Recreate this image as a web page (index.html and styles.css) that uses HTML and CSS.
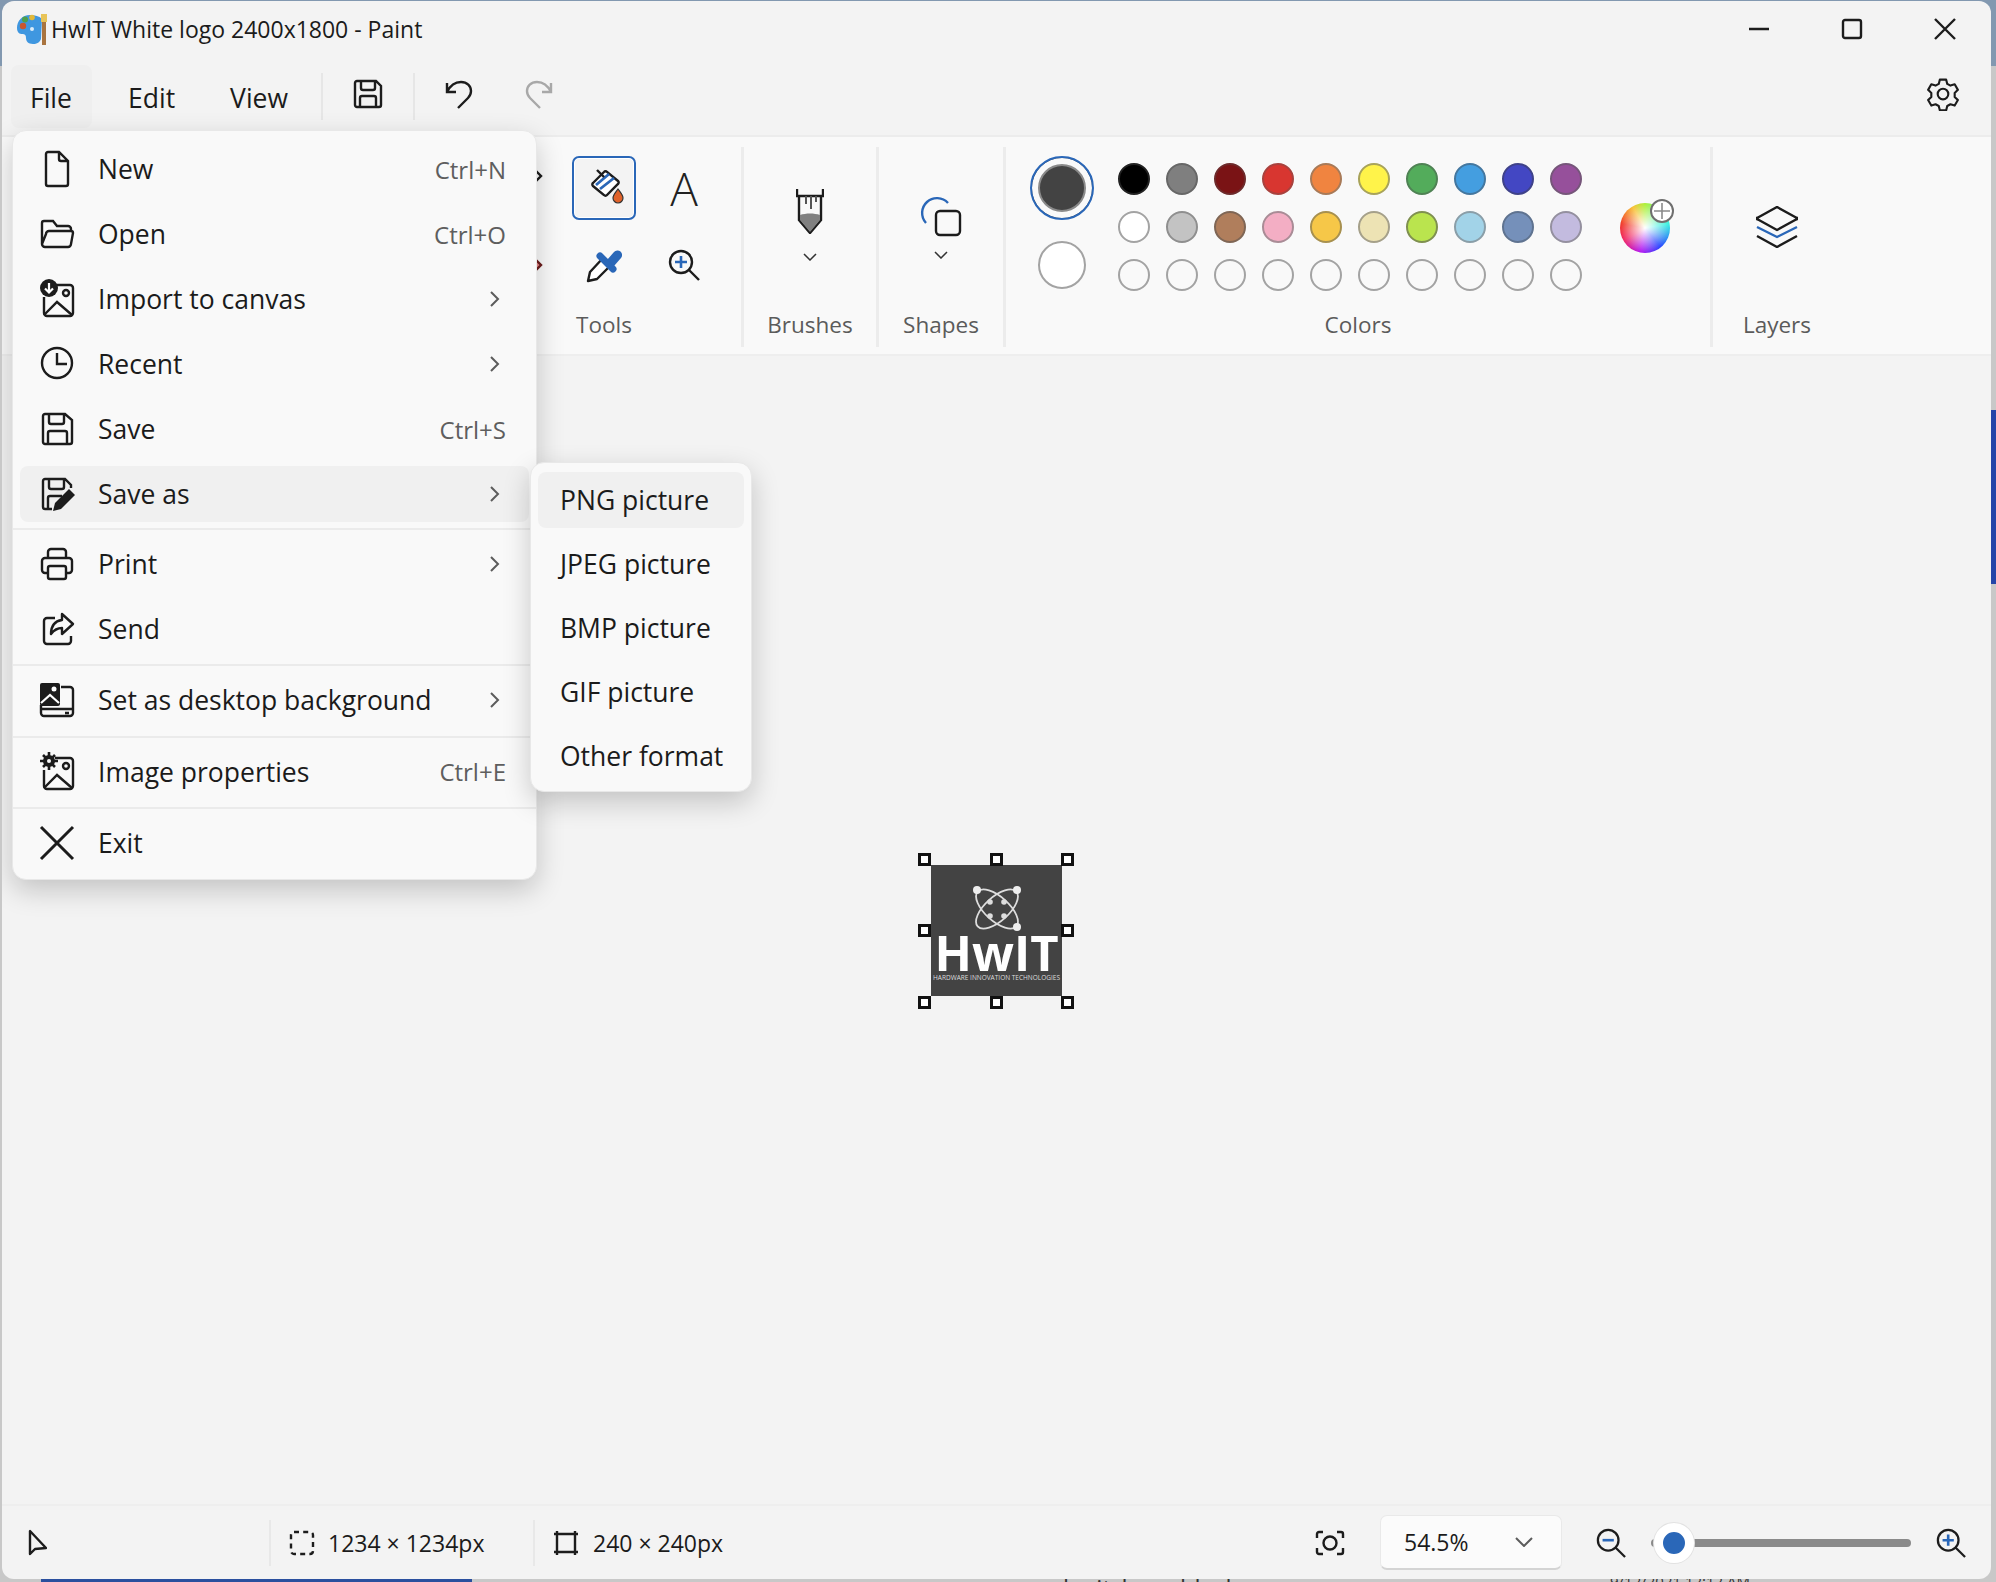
FILE: index.html
```html
<!DOCTYPE html>
<html lang="en">
<head>
    <meta charset="UTF-8">
    <meta name="viewport" content="width=device-width, initial-scale=1.0">
    <title>HwIT White logo 2400x1800 - Paint</title>
    <link rel="stylesheet" href="styles.css">
</head>
<body>
<div class="desktop">
    <!-- what shows around the window -->
    <div class="bg-top"></div>
    <div class="bg-right"></div>
    <div class="bg-bottom"></div>
    <span class="bg-file">hwit_logo_black</span>
    <span class="bg-date">9/12/2021 12:12 AM</span>

    <div class="window">
        <!-- Title bar -->
        <header class="titlebar">
            <svg class="app-icon" viewBox="0 0 32 32" width="32" height="32">
                <path d="M14 2C6 2 1 8 1 15c0 5 3 6 5 6 3 0 4 1 4 4 0 3 2 6 7 6 4 0 7-2 8-5l1-20C23 3 19 2 14 2z" fill="#3f97e0"/>
                <circle cx="7" cy="13" r="3.2" fill="#c9562f"/>
                <circle cx="9" cy="6.5" r="3" fill="#4fa04a"/>
                <circle cx="16" cy="4.5" r="2.8" fill="#e2b93a"/>
                <circle cx="16" cy="16" r="2" fill="#dcecf8"/>
                <path d="M26 8h4v24h-4z" fill="#a9743f"/>
                <path d="M25 1h6v8h-6z" fill="#e8c458"/>
            </svg>
            <span class="title-text">HwIT White logo 2400x1800 - Paint</span>
            <div class="win-controls">
                <button class="win-btn"><svg viewBox="0 0 24 24" width="24" height="24"><path d="M2 12h20" class="ln"/></svg></button>
                <button class="win-btn"><svg viewBox="0 0 24 24" width="24" height="24"><rect x="3" y="3" width="18" height="18" rx="2" class="ln"/></svg></button>
                <button class="win-btn"><svg viewBox="0 0 24 24" width="24" height="24"><path d="M2 2l20 20M22 2L2 22" class="ln"/></svg></button>
            </div>
        </header>

        <!-- Menu row -->
        <div class="toolbar">
            <a class="tab tab-active">File</a>
            <a class="tab">Edit</a>
            <a class="tab">View</a>
            <span class="tb-sep tb-sep-first"></span>
            <button class="tb-btn">
                <svg viewBox="0 0 32 32" width="32" height="32"><path d="M5 3h19l5 5v19a2 2 0 0 1-2 2H5a2 2 0 0 1-2-2V5a2 2 0 0 1 2-2z M9 3v7a2 2 0 0 0 2 2h10a2 2 0 0 0 2-2V3 M8 29V20a2 2 0 0 1 2-2h12a2 2 0 0 1 2 2v9" class="ln"/></svg>
            </button>
            <span class="tb-sep"></span>
            <button class="tb-btn">
                <svg viewBox="0 0 32 32" width="32" height="32"><path d="M3 5v9h9 M3 14C6 8 11 4 17 4c6 0 10 4 10 9 0 3-1 5-3 7L14 30" class="ln"/></svg>
            </button>
            <button class="tb-btn tb-redo">
                <svg viewBox="0 0 32 32" width="32" height="32"><path d="M29 5v9h-9 M29 14C26 8 21 4 15 4 9 4 5 8 5 13c0 3 1 5 3 7l10 10" class="ln ln-off"/></svg>
            </button>
            <button class="tb-settings">
                <svg viewBox="0 0 32 32" width="34" height="34"><path d="M13 2.5h6l1 4 3 1.600 4-1.200 3 5.200-3 2.900v3.800l3 2.900-3 5.200-4-1.200-3 1.600-1 4h-6l-1-4-3-1.600-4 1.200-3-5.200 3-2.900v-3.800l-3-2.900 3-5.200 4 1.200 3-1.600z" class="ln ln-gear" stroke-linejoin="round"/><circle cx="16" cy="16" r="5" class="ln ln-gear"/></svg>
            </button>
        </div>

        <!-- Ribbon -->
        <section class="ribbon">
            <div class="group group-tools">
                <div class="tool-grid">
                    <span class="tool-hidden tool-hidden-top"><svg viewBox="0 0 24 24" width="24" height="24"><path d="M12 3l9 9-9 9-9-9z" class="ln"/></svg></span>
                    <span class="tool tool-selected">
                        <svg viewBox="0 0 42 42" width="42" height="42">
                            <path d="M10 16L21 5a2 2 0 0 1 3 0l11 9a2 2 0 0 1 0 3L24 28a2 2 0 0 1-3 0l-11-9a2 2 0 0 1 0-3z" fill="#fff" stroke="#1c1c1c" stroke-width="2.4"/>
                            <path d="M13 18L26 7M17 22L31 11" stroke="#2a67b8" stroke-width="2.8" fill="none"/>
                            <path d="M14 3l7 7" stroke="#1c1c1c" stroke-width="2.4"/>
                            <path d="M35 22c3 4 5 6 5 9a5 5 0 0 1-10 0c0-3 2-5 5-9z" fill="#e0622a" stroke="#333" stroke-width="1.200"/>
                        </svg>
                    </span>
                    <span class="tool tool-text">A</span>
                    <span class="tool-hidden"><svg viewBox="0 0 24 24" width="24" height="24"><path d="M12 3l9 9-9 9-9-9z" fill="#e88b8b" stroke="#6b1c1c" stroke-width="2.4"/></svg></span>
                    <span class="tool">
                        <svg viewBox="0 0 36 36" width="36" height="36">
                            <path d="M17 11L4 25l-2 9 9-2 14-14" fill="#fff" stroke="#1c1c1c" stroke-width="2.4" stroke-linejoin="round"/>
                            <path d="M14 9l13 13" stroke="#2a67b8" stroke-width="7" stroke-linecap="round"/>
                            <path d="M21 13l7-8a4.500 4.500 0 0 1 7 6l-7 8z" fill="#2a67b8"/>
                        </svg>
                    </span>
                    <span class="tool">
                        <svg viewBox="0 0 32 32" width="32" height="32">
                            <circle cx="13" cy="13" r="11" class="ln"/>
                            <path d="M20.5 20.5L31 31" class="ln"/>
                            <path d="M13 7v12M7 13h12" stroke="#2a67b8" stroke-width="2.6" fill="none"/>
                        </svg>
                    </span>
                </div>
                <div class="group-label label-tools">Tools</div>
            </div>

            <div class="group group-brushes">
                <div class="group-body">
                    <svg viewBox="0 0 28 46" width="28" height="46">
                        <path d="M1 1v7h26V1" class="ln"/>
                        <path d="M3 8v24l11 13 11-13V8" class="ln"/>
                        <path d="M4 27c6-2 14-2 20 0v5L14 44 4 32z" fill="#808080"/>
                        <path d="M10 8v8M15 8v13M20 8v6" stroke="#555" stroke-width="2" fill="none"/>
                    </svg>
                    <svg class="chev-down" viewBox="0 0 14 8" width="14" height="8"><path d="M1 1l6 6 6-6" class="thin"/></svg>
                </div>
                <div class="group-label">Brushes</div>
            </div>

            <div class="group group-shapes">
                <div class="group-body body-shapes">
                    <svg viewBox="0 0 42 42" width="42" height="42">
                        <path d="M6 28A13.5 13.5 0 1 1 28 8" fill="none" stroke="#2a67b8" stroke-width="2.4"/>
                        <rect x="16" y="16" width="24" height="24" rx="4" class="ln" fill="none"/>
                    </svg>
                    <svg class="chev-down" viewBox="0 0 14 8" width="14" height="8"><path d="M1 1l6 6 6-6" class="thin"/></svg>
                </div>
                <div class="group-label">Shapes</div>
            </div>

            <div class="group group-colors">
                <div class="colors-body">
                    <div class="active-colors">
                        <span class="color-one"></span>
                        <span class="color-two"></span>
                    </div>
                    <div class="swatches">
                        <span class="sw c1"></span><span class="sw c2"></span><span class="sw c3"></span><span class="sw c4"></span><span class="sw c5"></span><span class="sw c6"></span><span class="sw c7"></span><span class="sw c8"></span><span class="sw c9"></span><span class="sw c10"></span>
                        <span class="sw c11"></span><span class="sw c12"></span><span class="sw c13"></span><span class="sw c14"></span><span class="sw c15"></span><span class="sw c16"></span><span class="sw c17"></span><span class="sw c18"></span><span class="sw c19"></span><span class="sw c20"></span>
                        <span class="sw"></span><span class="sw"></span><span class="sw"></span><span class="sw"></span><span class="sw"></span><span class="sw"></span><span class="sw"></span><span class="sw"></span><span class="sw"></span><span class="sw"></span>
                    </div>
                    <div class="wheel">
                        <span class="wheel-plus">
                            <svg viewBox="0 0 16 16" width="16" height="16"><path d="M8 0v16M0 8h16" stroke="#8a8a8a" stroke-width="1.6"/></svg>
                        </span>
                    </div>
                </div>
                <div class="group-label">Colors</div>
            </div>

            <div class="group group-layers">
                <div class="group-body">
                    <svg viewBox="0 0 42 42" width="42" height="42">
                        <path d="M21 1L40 11.5a1 1 0 0 1 0 2L21 24 2 13.5a1 1 0 0 1 0-2z" class="ln" stroke-linejoin="round"/>
                        <path d="M1 21l20 10 20-10" fill="none" stroke="#2a67b8" stroke-width="2.4"/>
                        <path d="M1 30l20 11 20-11" class="ln"/>
                    </svg>
                </div>
                <div class="group-label">Layers</div>
            </div>
        </section>

        <!-- Canvas -->
        <main class="canvas">
            <div class="picture">
                <svg class="atom" viewBox="0 0 50 50" width="50" height="50">
                    <ellipse cx="25" cy="25" rx="26" ry="12" transform="rotate(42 25 25)" fill="none" stroke="#ddd" stroke-width="1.8"/>
                    <ellipse cx="25" cy="25" rx="26" ry="12" transform="rotate(-42 25 25)" fill="none" stroke="#ddd" stroke-width="1.8"/>
                    <circle cx="5" cy="6" r="4" fill="#eee"/><circle cx="45" cy="6" r="4" fill="#eee"/><circle cx="45" cy="43" r="4" fill="#eee"/>
                    <circle cx="18" cy="18" r="2.8" fill="#ddd"/><circle cx="32" cy="18" r="2.8" fill="#ddd"/><circle cx="18" cy="32" r="2.8" fill="#ddd"/><circle cx="32" cy="32" r="2.8" fill="#ddd"/>
                </svg>
                <div class="logo-name">HwIT</div>
                <div class="logo-sub">HARDWARE INNOVATION TECHNOLOGIES</div>
                <span class="handle h-tl"></span><span class="handle h-tc"></span><span class="handle h-tr"></span>
                <span class="handle h-ml"></span><span class="handle h-mr"></span>
                <span class="handle h-bl"></span><span class="handle h-bc"></span><span class="handle h-br"></span>
            </div>
        </main>

        <!-- Status bar -->
        <footer class="statusbar">
            <div class="st-cell st-pointer">
                <svg viewBox="0 0 20 28" width="20" height="28"><path d="M3 2v23l5-5 11-1z" class="ln" stroke-linejoin="round"/></svg>
            </div>
            <div class="st-cell st-select">
                <svg viewBox="0 0 26 26" width="26" height="26"><rect x="2" y="2" width="22" height="22" rx="3" class="ln" stroke-dasharray="5 4.2"/></svg>
                <span>1234 × 1234px</span>
            </div>
            <div class="st-cell st-size">
                <svg viewBox="0 0 26 26" width="26" height="26"><path d="M1 4h24M1 22h24M4 1v24M22 1v24" class="ln"/></svg>
                <span>240 × 240px</span>
            </div>
            <div class="st-right">
                <svg class="st-shot" viewBox="0 0 30 26" width="30" height="26">
                    <path d="M2 8V4a2 2 0 0 1 2-2h4M22 2h4a2 2 0 0 1 2 2v4M28 18v4a2 2 0 0 1-2 2h-4M8 24H4a2 2 0 0 1-2-2v-4" class="ln"/>
                    <circle cx="15" cy="13" r="6.5" class="ln"/>
                </svg>
                <div class="zoom-select">
                    <span>54.5%</span>
                    <svg viewBox="0 0 18 10" width="18" height="10"><path d="M1 1l8 8 8-8" class="ln-grey"/></svg>
                </div>
                <svg class="st-zoomout" viewBox="0 0 32 32" width="30" height="30">
                    <circle cx="13" cy="13" r="11" class="ln"/><path d="M20.5 20.5L31 31" class="ln"/>
                    <path d="M7 13h12" stroke="#2a67b8" stroke-width="2.8"/>
                </svg>
                <div class="slider">
                    <span class="slider-thumb"></span>
                </div>
                <svg class="st-zoomin" viewBox="0 0 32 32" width="30" height="30">
                    <circle cx="13" cy="13" r="11" class="ln"/><path d="M20.5 20.5L31 31" class="ln"/>
                    <path d="M13 7v12M7 13h12" stroke="#2a67b8" stroke-width="2.8"/>
                </svg>
            </div>
        </footer>

        <!-- File menu -->
        <nav class="file-menu">
            <div class="menu-group menu-group-first">
                <div class="menu-item">
                    <svg viewBox="0 0 36 40" width="36" height="40"><path d="M9 3h11l9 9v23a2 2 0 0 1-2 2H9a2 2 0 0 1-2-2V5a2 2 0 0 1 2-2z M20 3v7a2 2 0 0 0 2 2h7" class="ln"/></svg>
                    <span class="item-text">New</span><span class="shortcut">Ctrl+N</span>
                </div>
                <div class="menu-item">
                    <svg viewBox="0 0 36 40" width="36" height="40"><path d="M3 30V9a2 2 0 0 1 2-2h9l4 5h11a3 3 0 0 1 3 3v2 M3 30a3 3 0 0 0 3 3h23a3 3 0 0 0 3-3l2-11a2 2 0 0 0-2-2H10a3 3 0 0 0-3 3z" class="ln"/></svg>
                    <span class="item-text">Open</span><span class="shortcut">Ctrl+O</span>
                </div>
                <div class="menu-item">
                    <svg viewBox="0 0 36 40" width="36" height="40">
                        <path d="M14 6h17a3 3 0 0 1 3 3v25a3 3 0 0 1-3 3H8a3 3 0 0 1-3-3V18" class="ln"/>
                        <path d="M5 36l13-13 15 13" class="ln"/><circle cx="27" cy="14" r="3" class="ln"/>
                        <circle cx="10" cy="9" r="9" fill="#1c1c1c"/>
                        <path d="M10 4v9M6 9.500l4 4 4-4" stroke="#fff" stroke-width="2.2" fill="none"/>
                    </svg>
                    <span class="item-text">Import to canvas</span>
                    <svg class="chev" viewBox="0 0 10 16" width="10" height="16"><path d="M1 1l7 7-7 7" class="ln-grey"/></svg>
                </div>
                <div class="menu-item">
                    <svg viewBox="0 0 36 40" width="36" height="40"><circle cx="18" cy="19" r="15" class="ln"/><path d="M18 9v11h10" class="ln"/></svg>
                    <span class="item-text">Recent</span>
                    <svg class="chev" viewBox="0 0 10 16" width="10" height="16"><path d="M1 1l7 7-7 7" class="ln-grey"/></svg>
                </div>
                <div class="menu-item">
                    <svg viewBox="0 0 36 40" width="36" height="40"><path d="M6 5h20l7 6v22a2 2 0 0 1-2 2H6a2 2 0 0 1-2-2V7a2 2 0 0 1 2-2z M10 5v8a2 2 0 0 0 2 2h11a2 2 0 0 0 2-2V5 M9 35V24a2 2 0 0 1 2-2h15a2 2 0 0 1 2 2v11" class="ln"/></svg>
                    <span class="item-text">Save</span><span class="shortcut">Ctrl+S</span>
                </div>
                <div class="menu-item menu-item-hover">
                    <svg viewBox="0 0 36 40" width="36" height="40">
                        <path d="M32 14v-3l-6-6H6a2 2 0 0 0-2 2v26a2 2 0 0 0 2 2h7 M10 5v8a2 2 0 0 0 2 2h11a2 2 0 0 0 2-2V5 M9 35V24a2 2 0 0 1 2-2h12" class="ln"/>
                        <path d="M14 37l2-8 14-14 6 6-14 14z" fill="#1c1c1c"/>
                    </svg>
                    <span class="item-text">Save as</span>
                    <svg class="chev" viewBox="0 0 10 16" width="10" height="16"><path d="M1 1l7 7-7 7" class="ln-grey"/></svg>
                </div>
            </div>
            <div class="menu-group">
                <div class="menu-item">
                    <svg viewBox="0 0 36 40" width="36" height="40"><path d="M9 14V8a3 3 0 0 1 3-3h12a3 3 0 0 1 3 3v6 M9 29H6a3 3 0 0 1-3-3V17a3 3 0 0 1 3-3h24a3 3 0 0 1 3 3v9a3 3 0 0 1-3 3h-3" class="ln"/><rect x="9" y="22" width="18" height="13" rx="2" class="ln"/></svg>
                    <span class="item-text">Print</span>
                    <svg class="chev" viewBox="0 0 10 16" width="10" height="16"><path d="M1 1l7 7-7 7" class="ln-grey"/></svg>
                </div>
                <div class="menu-item">
                    <svg viewBox="0 0 36 40" width="36" height="40"><path d="M16 9H8a3 3 0 0 0-3 3v20a3 3 0 0 0 3 3h21a3 3 0 0 0 3-3v-5" class="ln"/><path d="M23 5l11 10-11 10v-6c-5 0-8 2-11 6 0-8 4-13 11-14z" class="ln" stroke-linejoin="round"/></svg>
                    <span class="item-text">Send</span>
                </div>
            </div>
            <div class="menu-group">
                <div class="menu-item">
                    <svg viewBox="0 0 36 40" width="36" height="40">
                        <path d="M22 7h9a3 3 0 0 1 3 3v23a3 3 0 0 1-3 3H5a3 3 0 0 1-3-3v-8 M2 29h32M26 33h4" class="ln"/>
                        <rect x="1" y="3" width="20" height="23" rx="2" fill="#1c1c1c"/>
                        <circle cx="15" cy="9" r="2.500" fill="#fff"/>
                        <path d="M2 23l9-8 9 8" stroke="#fff" stroke-width="2.2" fill="none"/>
                    </svg>
                    <span class="item-text">Set as desktop background</span>
                    <svg class="chev" viewBox="0 0 10 16" width="10" height="16"><path d="M1 1l7 7-7 7" class="ln-grey"/></svg>
                </div>
            </div>
            <div class="menu-group">
                <div class="menu-item">
                    <svg viewBox="0 0 36 40" width="36" height="40">
                        <path d="M16 6h15a3 3 0 0 1 3 3v25a3 3 0 0 1-3 3H8a3 3 0 0 1-3-3V18" class="ln"/>
                        <path d="M5 36l13-13 15 13" class="ln"/><circle cx="27" cy="14" r="3" class="ln"/>
                        <circle cx="10" cy="9" r="6" fill="#1c1c1c"/>
                        <path d="M10 0v18M1 9h18M4 3l12 12M16 3L4 15" stroke="#1c1c1c" stroke-width="2.600"/>
                        <circle cx="10" cy="9" r="2" fill="#f9f9f9"/>
                    </svg>
                    <span class="item-text">Image properties</span><span class="shortcut">Ctrl+E</span>
                </div>
            </div>
            <div class="menu-group menu-group-last">
                <div class="menu-item">
                    <svg viewBox="0 0 36 40" width="36" height="40"><path d="M2 4l32 32M34 4L2 36" class="ln ln-exit"/></svg>
                    <span class="item-text">Exit</span>
                </div>
            </div>
        </nav>

        <!-- Save as submenu -->
        <div class="sub-menu">
            <div class="sub-item sub-item-hover">PNG picture</div>
            <div class="sub-item">JPEG picture</div>
            <div class="sub-item">BMP picture</div>
            <div class="sub-item">GIF picture</div>
            <div class="sub-item">Other format</div>
        </div>
    </div>
</div>
</body>
</html>
```

FILE: styles.css
```css
* {
    box-sizing: border-box;
}
body {
    margin: 0;
    font-family: "Open Sans", "Noto Sans", Arial, sans-serif;
    color: #1b1b1b;
    background: #c8c8c8;
}
svg {
    display: block;
    flex: none;
}
button {
    background: none;
    border: none;
    padding: 0;
    display: flex;
    align-items: center;
    justify-content: center;
}
.ln {
    fill: none;
    stroke: #1c1c1c;
    stroke-width: 2.4;
}
.ln-off {
    stroke: #a8a8a8;
}
.ln-gear {
    stroke-width: 2;
}
.ln-exit {
    stroke-width: 3;
}
.ln-grey {
    fill: none;
    stroke: #5c5c5c;
    stroke-width: 2;
}
.thin {
    fill: none;
    stroke: #333;
    stroke-width: 1.5;
}

/* desktop behind the window */
.desktop {
    position: relative;
    width: 1996px;
    height: 1582px;
    overflow: hidden;
    padding: 1px 5px 3px 2px;
}
.bg-top {
    position: absolute;
    left: 0;
    top: 0;
    width: 100%;
    height: 66px;
    background: #8298b0;
}
.bg-right {
    position: absolute;
    right: 0;
    top: 410px;
    width: 6px;
    height: 174px;
    background: #2445a8;
}
.bg-bottom {
    position: absolute;
    left: 41px;
    bottom: 0;
    width: 431px;
    height: 4px;
    background: #2a4f9e;
}
.bg-file, .bg-date {
    position: absolute;
    top: 1571px;
    color: #333;
}
.bg-file {
    left: 1063px;
    font-size: 24px;
}
.bg-date {
    left: 1610px;
    font-size: 15px;
}

.window {
    position: relative;
    height: 100%;
    display: flex;
    flex-direction: column;
    background: #f3f3f3;
    border-radius: 12px;
    overflow: hidden;
}

/* title bar */
.titlebar {
    height: 56px;
    flex: none;
    display: flex;
    align-items: center;
    padding-left: 14px;
}
.title-text {
    margin-left: 3px;
    font-size: 23px;
}
.win-controls {
    margin-left: auto;
    display: flex;
    gap: 2px;
    padding-right: 1px;
}
.win-btn {
    width: 91px;
    height: 54px;
}

/* menu row */
.toolbar {
    height: 80px;
    flex: none;
    display: flex;
    align-items: center;
    padding: 0 0 0 9px;
    border-bottom: 2px solid #ececec;
}
.tab {
    height: 63px;
    padding: 3px 19px 0;
    margin-right: 17px;
    border-radius: 8px;
    font-size: 26.5px;
    display: flex;
    align-items: center;
}
.tab-active {
    width: 81px;
    background: #efefef;
}
.tb-sep {
    width: 2px;
    height: 47px;
    background: #e6e6e6;
}
.tb-sep-first {
    margin-left: -3px;
}
.tb-btn {
    width: 90px;
    height: 60px;
    padding-bottom: 4px;
}
.tb-redo {
    width: 66px;
}
.tb-settings {
    margin-left: auto;
    width: 96px;
    height: 60px;
    padding-bottom: 4px;
}

/* ribbon */
.ribbon {
    height: 219px;
    flex: none;
    display: flex;
    padding: 10px 0 7px;
    background: #f9f9f9;
    border-bottom: 2px solid #eeeeee;
}
.group {
    display: flex;
    flex-direction: column;
    border-right: 3px solid #ececec;
}
.group-body {
    flex: 1;
    display: flex;
    flex-direction: column;
    align-items: center;
    padding-top: 41px;
    gap: 19px;
}
.body-shapes {
    padding-top: 48px;
    gap: 14px;
}
.group-label {
    height: 44px;
    line-height: 44px;
    flex: none;
    font-size: 22.5px;
    color: #5b5b5b;
    text-align: center;
}
.group-tools {
    width: 742px;
    align-items: flex-end;
    padding-right: 17px;
}
.tool-grid {
    flex: 1;
    display: grid;
    grid-template-columns: 60px 80px 80px;
    grid-template-rows: 77px 77px;
    padding-top: 2px;
}
.tool {
    display: flex;
    align-items: center;
    justify-content: center;
}
.tool-hidden {
    display: flex;
    align-items: center;
    padding-left: 16px;
}
.tool-hidden-top {
    padding-bottom: 24px;
}
.tool-selected {
    width: 64px;
    height: 64px;
    align-self: center;
    justify-self: center;
    background: #f3f3f3;
    border: 2px solid #2a67b8;
    border-radius: 7px;
    box-shadow: inset 0 0 0 1px #fff;
}
.tool-text {
    font-size: 46px;
    font-weight: 300;
    color: #222;
}
.label-tools {
    width: 80px;
    margin-right: 80px;
}
.group-brushes {
    width: 135px;
}
.group-shapes {
    width: 127px;
}
.group-colors {
    width: 707px;
}
.group-layers {
    width: 128px;
    border-right: none;
}
.group-layers .group-body {
    padding-top: 59px;
}

/* colours */
.colors-body {
    flex: 1;
    display: flex;
    padding: 9px 0 0 24px;
}
.active-colors {
    width: 64px;
    display: flex;
    flex-direction: column;
    align-items: center;
    gap: 21px;
}
.color-one {
    width: 64px;
    height: 64px;
    border-radius: 50%;
    background: #434343;
    border: 2px solid #2a67b8;
    box-shadow: inset 0 0 0 6px #f9f9f9, inset 0 0 0 8px #8a8a8a;
}
.color-two {
    width: 48px;
    height: 48px;
    border-radius: 50%;
    background: #fff;
    border: 2px solid #a3a3a3;
}
.swatches {
    margin: 7px 0 0 24px;
    width: 464px;
    height: 128px;
    display: grid;
    grid-template-columns: repeat(10, 32px);
    grid-auto-rows: 32px;
    gap: 16px;
}
.sw {
    border-radius: 50%;
    border: 2px solid #a3a3a3;
}
.c1 { background: #000; border-color: #222; }
.c2 { background: #7f7f7f; border-color: #676767; }
.c3 { background: #7a1315; border-color: #6d2a2b; }
.c4 { background: #d83630; border-color: #a8423e; }
.c5 { background: #f08440; border-color: #a87a58; }
.c6 { background: #fff34a; border-color: #a8a35a; }
.c7 { background: #53ac5b; border-color: #4f8254; }
.c8 { background: #449ee0; border-color: #44779f; }
.c9 { background: #4347c3; border-color: #3f4289; }
.c10 { background: #96509b; border-color: #76567a; }
.c11 { background: #fff; }
.c12 { background: #c3c3c3; border-color: #8f8f8f; }
.c13 { background: #b07e5c; border-color: #7f6655; }
.c14 { background: #f3aec4; border-color: #a98c96; }
.c15 { background: #f6c748; border-color: #a7904f; }
.c16 { background: #ede3b4; border-color: #a5a08a; }
.c17 { background: #bae44e; border-color: #7f9050; }
.c18 { background: #a2d3e8; border-color: #8a9ea8; }
.c19 { background: #7590ba; border-color: #5f7390; }
.c20 { background: #c3bbdf; border-color: #94909f; }
.wheel {
    position: relative;
    width: 50px;
    height: 50px;
    margin: 47px 0 0 38px;
    border-radius: 50%;
    background:
        radial-gradient(circle, #fff 0, rgba(255, 255, 255, 0) 72%),
        conic-gradient(#a8f030 0deg, #30f0e0 80deg, #2040ff 140deg, #b010f0 190deg, #f02060 240deg, #f03020 280deg, #f8c030 330deg, #a8f030 360deg);
}
.wheel-plus {
    position: absolute;
    left: 30px;
    top: -4px;
    width: 24px;
    height: 24px;
    border-radius: 50%;
    background: #fff;
    border: 2px solid #6f6f6f;
    display: flex;
    align-items: center;
    justify-content: center;
}

/* canvas */
.canvas {
    flex: 1;
    display: flex;
    align-items: center;
    justify-content: center;
}
.picture {
    position: relative;
    width: 131px;
    height: 131px;
    background: #434343;
    display: flex;
    flex-direction: column;
    align-items: center;
    padding-top: 19px;
    color: #fff;
}
.logo-name {
    margin-top: -4px;
    font-size: 49px;
    line-height: 44px;
    font-weight: 700;
    white-space: nowrap;
}
.logo-sub {
    font-size: 6.500px;
    line-height: 8px;
    color: #ddd;
    white-space: nowrap;
}
.handle {
    position: absolute;
    width: 13px;
    height: 13px;
    background: #fff;
    border: 3px solid #111;
}
.h-tl, .h-tc, .h-tr { top: -12px; }
.h-ml, .h-mr { top: 59px; }
.h-bl, .h-bc, .h-br { bottom: -13px; }
.h-tl, .h-ml, .h-bl { left: -13px; }
.h-tc, .h-bc { left: 59px; }
.h-tr, .h-mr, .h-br { right: -12px; }

/* status bar */
.statusbar {
    flex: 1;
    max-height: 75px;
    min-height: 75px;
    display: flex;
    align-items: center;
    border-top: 2px solid #eeeeee;
    font-size: 23px;
}
.st-cell {
    height: 46px;
    display: flex;
    align-items: center;
}
.st-pointer {
    width: 269px;
    padding-left: 25px;
    border-right: 2px solid #e8e8e8;
}
.st-select {
    width: 264px;
    padding-left: 18px;
    gap: 13px;
    border-right: 2px solid #e8e8e8;
}
.st-size {
    padding-left: 18px;
    gap: 14px;
}
.st-right {
    margin-left: auto;
    display: flex;
    align-items: center;
    padding-right: 25px;
}
.zoom-select {
    width: 182px;
    height: 55px;
    margin-left: 35px;
    padding: 0 28px 0 23px;
    display: flex;
    align-items: center;
    justify-content: space-between;
    background: #fbfbfb;
    border: 1px solid #e9e9e9;
    border-bottom: 2px solid #d4d4d4;
    border-radius: 7px;
}
.st-zoomout {
    margin-left: 34px;
}
.slider {
    position: relative;
    width: 260px;
    height: 8px;
    margin-left: 25px;
    background: #8a8a8a;
    border-radius: 4px;
}
.slider-thumb {
    position: absolute;
    left: 3px;
    top: -16px;
    width: 40px;
    height: 40px;
    border-radius: 50%;
    background: #2a67b8;
    border: 9px solid #fff;
    box-shadow: 0 0 0 1px #e2e2e2;
}
.st-zoomin {
    margin-left: 25px;
}

/* file menu */
.file-menu {
    position: absolute;
    left: 10px;
    top: 129px;
    width: 525px;
    background: #f9f9f9;
    border: 1px solid #e8e8e8;
    border-radius: 14px;
    box-shadow: 0 10px 28px rgba(0, 0, 0, 0.2);
}
.menu-group {
    display: flex;
    flex-direction: column;
    gap: 9px;
    padding: 6px 0 7.3px;
    border-top: 2px solid #ebebeb;
}
.menu-group-first {
    padding: 10px 0 6px;
    border-top: none;
}
.menu-group-last {
    padding-bottom: 8px;
}
.menu-item {
    height: 56px;
    margin: 0 7px;
    padding: 0 25px 0 19px;
    display: flex;
    align-items: center;
    border-radius: 8px;
    font-size: 26.5px;
}
.menu-item-hover {
    background: #f0f0f0;
}
.item-text {
    margin-left: 23px;
    flex: 1;
}
.shortcut {
    font-size: 24px;
    color: #5e5e5e;
    margin-right: -2px;
}
.chev {
    margin-right: 4px;
}

/* save as submenu */
.sub-menu {
    position: absolute;
    left: 528px;
    top: 461px;
    width: 222px;
    padding: 9px 7px 7px;
    display: flex;
    flex-direction: column;
    gap: 8px;
    background: #f9f9f9;
    border: 1px solid #e8e8e8;
    border-radius: 14px;
    box-shadow: 0 10px 28px rgba(0, 0, 0, 0.2);
}
.sub-item {
    height: 56px;
    padding-left: 22px;
    display: flex;
    align-items: center;
    border-radius: 8px;
    font-size: 26.5px;
    white-space: nowrap;
}
.sub-item-hover {
    background: #f0f0f0;
}
```
